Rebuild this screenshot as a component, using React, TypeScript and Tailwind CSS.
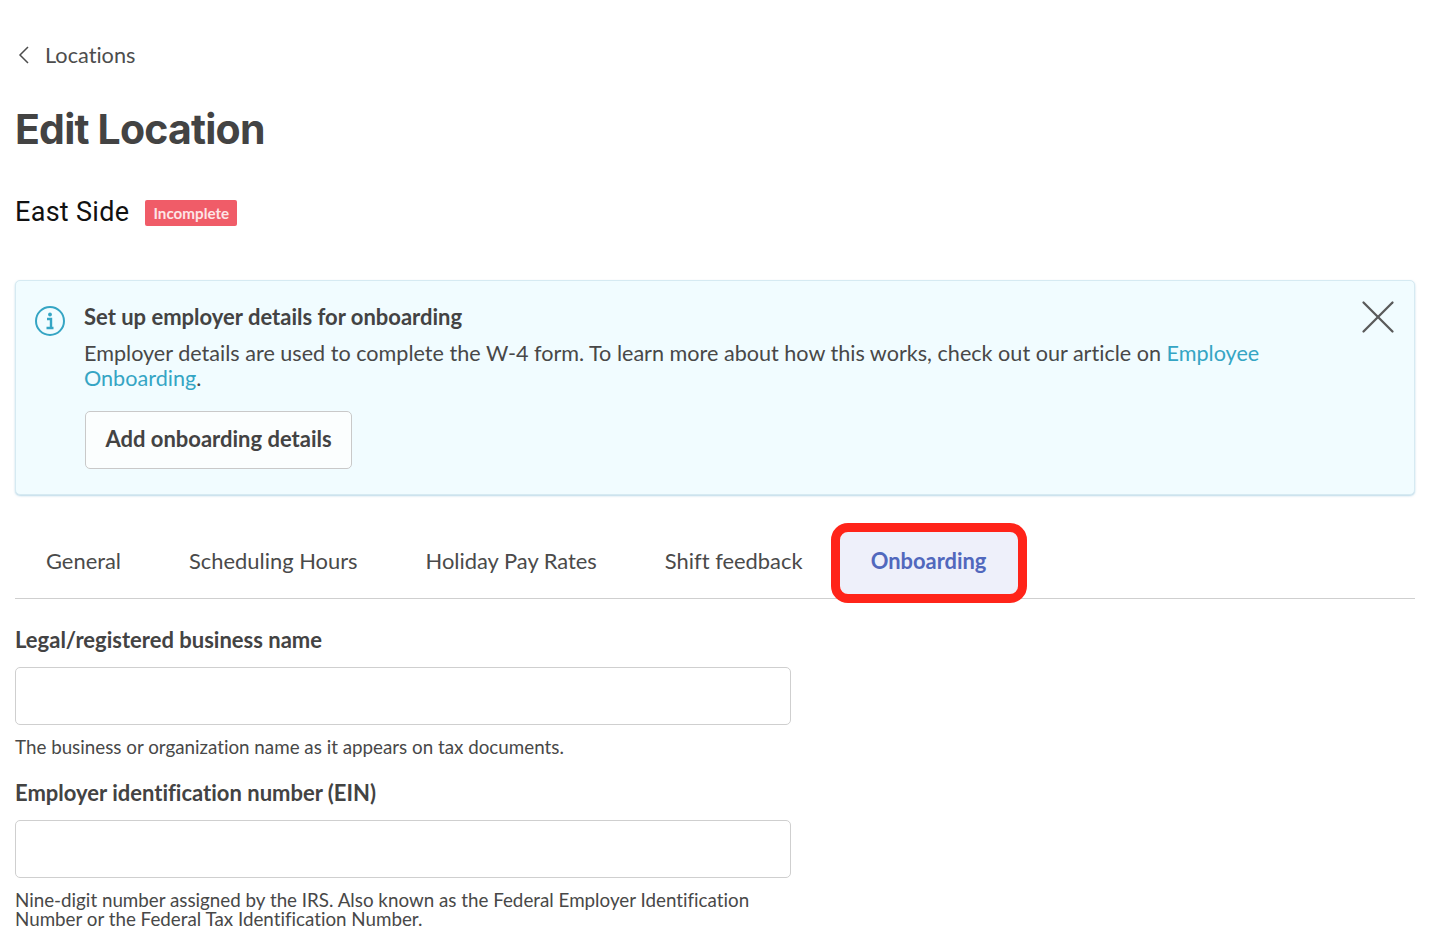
import React from 'react';
import { X } from 'lucide-react';

const tabs = ['General', 'Scheduling Hours', 'Holiday Pay Rates', 'Shift feedback'];

const Field: React.FC<{ label: string; hint: React.ReactNode; className?: string }> = ({ label, hint, className }) => (
  <div className={className}>
    <label className="block text-[22px] leading-[26px] font-bold text-[#434343]">{label}</label>
    <div className="mt-[14px] w-[776px] h-[58px] rounded-[5px] border border-[#cfcfcf] bg-white" />
    <p className="mt-[12px] w-[776px] text-[18.8px] leading-[19px] text-[#484848]">{hint}</p>
  </div>
);

export default function App() {
  return (
    <div className="w-[1430px] h-[935px] overflow-hidden bg-white px-[15px] font-['Lato','Open_Sans',sans-serif] [font-variant-ligatures:none]">
      <div className="pt-[41px] flex items-center h-[69px] text-[#4d4d4d]">
        <svg className="ml-[3px] w-[11px] h-[18px]" viewBox="0 0 11 18" fill="none">
          <path d="M10 1 2 9l8 8" stroke="#4d4d4d" strokeWidth="1.5" />
        </svg>
        <span className="ml-[16px] text-[21.7px] leading-[28px]">Locations</span>
      </div>

      <h1 className="mt-[32px] text-[41px] leading-[56px] font-bold text-[#434343] font-['Inter',sans-serif] tracking-[-0.8px]">Edit Location</h1>

      <div className="mt-[40px] flex items-center h-[30px]">
        <span className="text-[27px] leading-[30px] text-[#111111] font-['Roboto',sans-serif] tracking-[0.3px]">East Side</span>
        <span className="ml-[16px] mt-[2px] h-[26px] w-[92px] flex items-center justify-center rounded-[2px] bg-[#f05c68] text-[15.2px] font-bold text-[#fde4e6]">Incomplete</span>
      </div>

      <div className="mt-[53px] h-[215px] relative flex rounded-[5px] border border-[#d6eaf2] bg-[#f1fcff] shadow-[0_1px_2px_rgba(120,180,210,0.5)] pl-[19px] pt-[23px]">
        <svg className="mt-[1px] -ml-[1px] mr-[1px] w-[32px] h-[32px] shrink-0" viewBox="0 0 32 32" fill="none">
          <circle cx="16" cy="16" r="14" stroke="#35a5c4" strokeWidth="2" />
          <circle cx="16" cy="9.5" r="1.9" fill="#35a5c4" />
          <path d="M13 14h4v9M12.5 23h7" stroke="#35a5c4" strokeWidth="2.4" />
        </svg>
        <div className="ml-[17px] flex-1">
          <p className="text-[22px] leading-[26px] font-bold text-[#434343]">Set up employer details for onboarding</p>
          <p className="mt-[11px] w-[1210px] text-[21.6px] leading-[25px] text-[#484848]">
            Employer details are used to complete the W-4 form. To learn more about how this works, check out our article on{' '}
            <span className="text-[#35a5c4]">Employee Onboarding</span>.
          </p>
          <button className="mt-[20px] ml-[1px] h-[58px] w-[267px] pb-[3px] rounded-[5px] border border-[#c9c9c9] bg-[#fbfefe] text-[22px] font-bold text-[#434343]">
            Add onboarding details
          </button>
        </div>
        <X className="absolute right-[7px] top-[7px] w-[58px] h-[58px] text-[#5a5a5a]" strokeWidth={0.95} />
      </div>

      <div className="mt-[37px] h-[67px] flex items-center border-b border-[#cfcfcf] pb-[4px] text-[21.9px] text-[#4a4a4a]">
        {tabs.map((t, i) => (
          <span key={t} className={i === 0 ? 'ml-[31px] mr-[68px] pb-[3px]' : 'mr-[68px] pb-[3px]'}>{t}</span>
        ))}
        <span className="-ml-[31px] w-[178px] h-[62px] pb-[3px] flex items-center justify-center rounded-[8px] bg-[#eef0fa] font-bold text-[#5168bd] outline-[9px] outline-solid outline-[#ff2419]">
          Onboarding
        </span>
      </div>

      <Field className="mt-[28px]" label="Legal/registered business name" hint="The business or organization name as it appears on tax documents." />
      <Field
        className="mt-[24px]"
        label="Employer identification number (EIN)"
        hint="Nine-digit number assigned by the IRS. Also known as the Federal Employer Identification Number or the Federal Tax Identification Number."
      />
    </div>
  );
}
